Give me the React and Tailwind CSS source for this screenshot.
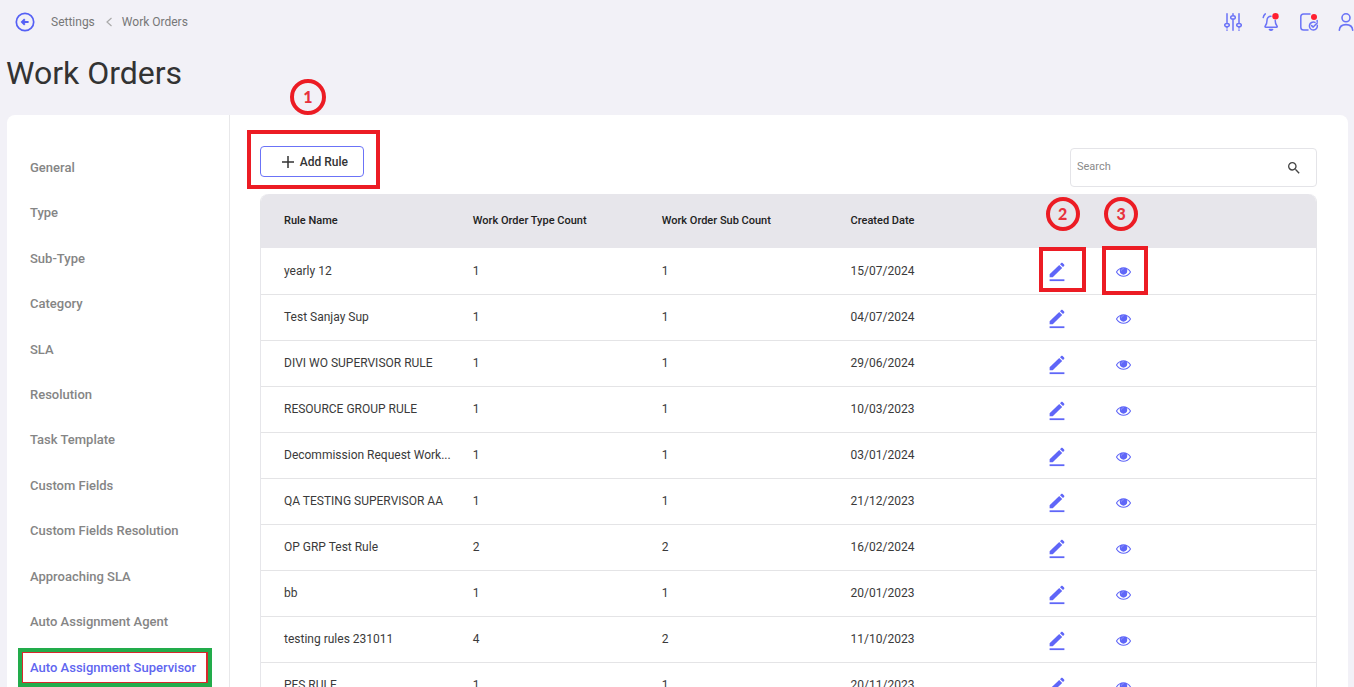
import React from "react";
import { MdSearch } from "react-icons/md";

const SECTIONS = [
  "General",
  "Type",
  "Sub-Type",
  "Category",
  "SLA",
  "Resolution",
  "Task Template",
  "Custom Fields",
  "Custom Fields Resolution",
  "Approaching SLA",
  "Auto Assignment Agent",
  "Auto Assignment Supervisor",
];

const RULES = [
  { name: "yearly 12", types: 1, subs: 1, created: "15/07/2024" },
  { name: "Test Sanjay Sup", types: 1, subs: 1, created: "04/07/2024" },
  { name: "DIVI WO SUPERVISOR RULE", types: 1, subs: 1, created: "29/06/2024" },
  { name: "RESOURCE GROUP RULE", types: 1, subs: 1, created: "10/03/2023" },
  { name: "Decommission Request Work...", types: 1, subs: 1, created: "03/01/2024" },
  { name: "QA TESTING SUPERVISOR AA", types: 1, subs: 1, created: "21/12/2023" },
  { name: "OP GRP Test Rule", types: 2, subs: 2, created: "16/02/2024" },
  { name: "bb", types: 1, subs: 1, created: "20/01/2023" },
  { name: "testing rules 231011", types: 4, subs: 2, created: "11/10/2023" },
  { name: "PFS RULE", types: 1, subs: 1, created: "20/11/2023" },
];

function BackIcon() {
  return (
    <svg viewBox="0 0 20 20" className="size-5" fill="none" stroke="#5560f5" strokeWidth="1.7" aria-hidden="true">
      <circle cx="10" cy="10" r="8.7" />
      <path d="M13.6 10H7.2M9.8 7.2 7 10l2.8 2.8" strokeWidth="2" />
    </svg>
  );
}

function SlidersIcon() {
  return (
    <svg viewBox="0 0 18 18" className="size-[18px]" fill="none" stroke="#6b73f7" strokeWidth="1.5" strokeLinecap="round" aria-hidden="true">
      <path d="M3 .8v8.8M3 14.6v.4M3 17v.2M9 .8v1M9 6.6v10.6M15 .8v8.8M15 14.6v.4M15 17v.2" />
      <ellipse cx="3" cy="12.1" rx="2.3" ry="1.7" />
      <ellipse cx="9" cy="4.4" rx="2.3" ry="1.7" />
      <ellipse cx="15" cy="12.1" rx="2.3" ry="1.7" />
    </svg>
  );
}

function BellIcon() {
  return (
    <svg viewBox="0 0 18 18" className="size-[18px] overflow-visible" fill="none" stroke="#6b73f7" strokeWidth="1.5" strokeLinecap="round" strokeLinejoin="round" aria-hidden="true">
      <path d="M9 3.2c-2.6 0-4 1.900-4 4.200 0 3-.6 4.200-1.900 5.900-.3.500 0 .9.500.9h11c.6 0 .8-.5.500-.9-1.300-1.700-1.900-2.900-1.900-5.900" />
      <path d="M7.400 16.500c.9 1 2.300 1 3.200 0z" fill="#6b73f7" />
      <path d="M1.200 4.600C1.500 3 2.200 1.800 3.300.9" />
      <circle cx="13.500" cy="3.200" r="3.200" fill="#ff2030" stroke="none" />
    </svg>
  );
}

function TaskIcon() {
  return (
    <svg viewBox="0 0 18 18" className="size-[18px] overflow-visible" fill="none" stroke="#6b73f7" strokeWidth="1.5" strokeLinecap="round" strokeLinejoin="round" aria-hidden="true">
      <path d="M10 .9H3.600C1.800.9.8 1.900.8 3.700v10.600c0 1.800 1 2.800 2.800 2.800H8" />
      <path d="M17.200 8.500v-1" />
      <path d="M17.300 12.200a4 4 0 1 1-2.300-2.800" />
      <path d="m11.600 12.600 1.600 1.500 4-4.200" />
      <circle cx="14" cy="4" r="3" fill="#ff2030" stroke="none" />
    </svg>
  );
}

function UserIcon() {
  return (
    <svg viewBox="0 0 16 18" className="h-[18px] w-4" fill="none" stroke="#6b73f7" strokeWidth="1.600" strokeLinecap="round" aria-hidden="true">
      <circle cx="8" cy="4.800" r="4" />
      <path d="M1.300 17.200c.3-3.500 2.900-5.600 6.700-5.600s6.400 2.100 6.700 5.600" />
    </svg>
  );
}

function PencilIcon() {
  return (
    <svg viewBox="0 0 16 20" className="h-5 w-4" fill="#5f66f8" aria-hidden="true">
      <path d="M.6 12.200 10.200 2.900l3 3-9.500 9.300H.6z" />
      <path d="m11 2.200 1.200-1.200c.4-.4 1-.4 1.400 0l1.500 1.500c.4.400.4 1 0 1.400L14 5.100z" />
      <path d="M.6 17.300h14.800v1.800H.6z" />
    </svg>
  );
}

function EyeIcon() {
  return (
    <svg viewBox="0 0 1792 1792" className="size-[15px]" fill="#5f66f8" aria-hidden="true">
      <circle cx="896" cy="830" r="330" fillOpacity="0.75" />
      <path d="M1664 960q-152-236-381-353 61 104 61 225 0 185-131.5 316.5t-316.5 131.5-316.5-131.5-131.500-316.5q0-121 61-225-229 117-381 353 133 205 333.5 326.5t434.5 121.5 434.5-121.5 333.5-326.5zm-720-384q0-20-14-34t-34-14q-125 0-214.5 89.5t-89.5 214.5q0 20 14 34t34 14 34-14 14-34q0-86 61-147t147-61q20 0 34-14t14-34zm848 384q0 34-20 69-140 230-376.5 368.5t-499.5 138.5-499.5-139-376.5-368q-20-35-20-69t20-69q140-229 376.5-368t499.5-139 499.5 139 376.5 368q20 35 20 69z" />
    </svg>
  );
}

function Step({ number, className }) {
  return (
    <span
      className={
        "pointer-events-none absolute flex items-center justify-center rounded-full border-4 border-[#ec1c24] font-[Lato,sans-serif] text-base leading-none font-black text-[#e8323c] " +
        className
      }
    >
      {number}
    </span>
  );
}

function Frame({ className }) {
  return <span aria-hidden="true" className={"pointer-events-none absolute border-4 border-[#ec1c24] " + className} />;
}

export default function App() {
  return (
    <div className="flex h-screen flex-col overflow-hidden bg-[#f2f1f7] font-[Roboto,sans-serif] text-[#333]">
      <header className="flex h-11 shrink-0 items-center justify-between pl-[15px]">
        <nav aria-label="Breadcrumb" className="flex items-center text-xs text-[#777]">
          <button type="button" aria-label="Back" className="mr-4">
            <BackIcon />
          </button>
          <a href="#settings">Settings</a>
          <svg viewBox="0 0 8 12" className="mr-[9px] ml-[10px] h-3 w-2" fill="none" stroke="#aaa" strokeWidth="1.200" aria-hidden="true">
            <path d="M6.500 2 2 6l4.500 4" />
          </svg>
          <a href="#work-orders">Work Orders</a>
        </nav>
        <div className="flex items-center gap-5">
          <button type="button" aria-label="Preferences"><SlidersIcon /></button>
          <button type="button" aria-label="Notifications"><BellIcon /></button>
          <button type="button" aria-label="Tasks"><TaskIcon /></button>
          <button type="button" aria-label="Profile"><UserIcon /></button>
        </div>
      </header>

      <h1 className="mb-[22px] shrink-0 pt-[9px] pl-[6px] text-[32px] leading-10">Work Orders</h1>

      <main className="mr-[6px] ml-[7px] flex shrink-0 rounded-t-lg bg-white">
        <nav aria-label="Work order settings" className="w-[223px] shrink-0 border-r border-[#e8e8ea] pt-[30px]">
          <ul className="grid h-[545px] auto-rows-fr">
            {SECTIONS.map((label, i) => {
              const active = i === SECTIONS.length - 1;
              return (
                <li key={label} className="relative flex items-center pl-[23px]">
                  <a
                    href="#section"
                    aria-current={active ? "page" : undefined}
                    className={"text-[13px] font-medium whitespace-nowrap " + (active ? "text-[#5f66f0]" : "text-[#858585]")}
                  >
                    {label}
                  </a>
                  {active && (
                    <span
                      aria-hidden="true"
                      className="pointer-events-none absolute inset-y-[3px] right-[17px] left-[11px] border-4 border-[#22ac4b]"
                    >
                      <span className="block h-full border border-r-2 border-[#d8282c]" />
                    </span>
                  )}
                </li>
              );
            })}
          </ul>
        </nav>

        <section className="min-w-0 grow pt-[31px] pr-[31px] pl-[30px]">
          <div className="flex items-start justify-between pb-[7px]">
            <div className="relative">
              <button
                type="button"
                className="flex h-[31px] w-[104px] items-center justify-end gap-[6px] rounded border border-[#6b73f7] pt-px pr-[15px] text-xs font-medium whitespace-nowrap"
              >
                <svg viewBox="0 0 12 12" className="size-3" stroke="#333" strokeWidth="1.500" aria-hidden="true">
                  <path d="M6 0v12M0 6h12" />
                </svg>
                Add Rule
              </button>
              <Frame className="-top-4 -right-4 -bottom-3 -left-[13px]" />
              <Step number="1" className="-top-[67px] left-[30px] size-9" />
            </div>
            <div className="mt-[2px] flex h-[39px] w-[247px] items-center rounded border border-[#e4e4e8] px-[6px]">
              <input
                type="search"
                aria-label="Search"
                placeholder="Search"
                className="min-w-0 grow text-[11px] outline-none placeholder:text-[#8a8a8a]"
              />
              <button type="button" aria-label="Run search" className="mr-2">
                <MdSearch className="size-4 text-[#444]" />
              </button>
            </div>
          </div>

          <div className="rounded-t-lg border border-t-0 border-[#e6e6ea]">
            <table className="w-full table-fixed border-collapse text-left">
              <colgroup>
                <col className="w-[17.9%]" />
                <col className="w-[17.9%]" />
                <col className="w-[17.9%]" />
                <col className="w-[18.4%]" />
                <col className="w-[6.4%]" />
                <col />
              </colgroup>
              <thead>
                <tr className="h-[54px] text-[11px] whitespace-nowrap text-[#222]">
                  <th scope="col" className="rounded-tl-lg bg-[#e7e6eb] pl-[23px] font-medium">Rule Name</th>
                  <th scope="col" className="bg-[#e7e6eb] pl-[23px] font-medium">Work Order Type Count</th>
                  <th scope="col" className="bg-[#e7e6eb] pl-[23px] font-medium">Work Order Sub Count</th>
                  <th scope="col" className="bg-[#e7e6eb] pl-[23px] font-medium">Created Date</th>
                  <th scope="col" aria-label="Edit" className="relative bg-[#e7e6eb]">
                    <Step number="2" className="top-[3px] left-6 size-[34px]" />
                  </th>
                  <th scope="col" aria-label="View" className="relative rounded-tr-lg bg-[#e7e6eb]">
                    <Step number="3" className="top-[3px] left-[15px] size-[34px]" />
                  </th>
                </tr>
              </thead>
              <tbody>
                {RULES.map((rule, i) => (
                  <tr key={rule.name} className="h-[46px] border-b border-[#e4e4e6] text-xs whitespace-nowrap text-[#3a3a3a]">
                    <td className="pl-[23px]">{rule.name}</td>
                    <td className="pl-[23px]">{rule.types}</td>
                    <td className="pl-[23px]">{rule.subs}</td>
                    <td className="pl-[23px]">{rule.created}</td>
                    <td className="relative pl-[27px]">
                      <button type="button" aria-label={"Edit " + rule.name} className="mt-[3px] block">
                        <PencilIcon />
                      </button>
                      {i === 0 && <Frame className="-top-px left-[17px] h-[45px] w-[47px]" />}
                    </td>
                    <td className="relative pl-[27px]">
                      <button type="button" aria-label={"View " + rule.name} className="mt-[2px] block">
                        <EyeIcon />
                      </button>
                      {i === 0 && <Frame className="-top-[2px] left-[13px] h-[49px] w-[46px]" />}
                    </td>
                  </tr>
                ))}
              </tbody>
            </table>
          </div>
        </section>
      </main>
    </div>
  );
}
